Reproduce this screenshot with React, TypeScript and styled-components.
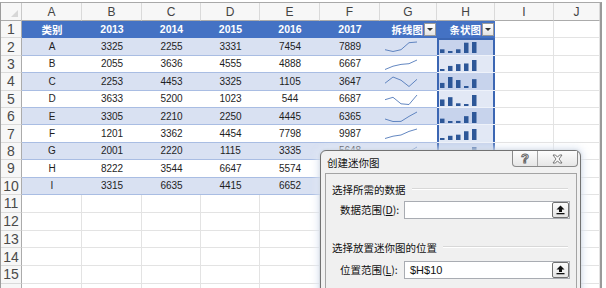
import React from "react";
import styled, { createGlobalStyle, css } from "styled-components";

const GlobalStyle = createGlobalStyle`
  html, body {
    margin: 0;
    padding: 0;
    background: #fff;
  }
  body {
    font-family: "Liberation Sans", "Noto Sans CJK SC", sans-serif;
  }
`;

const COL_WIDTHS = [21, 60, 60, 59, 59, 60, 60, 57, 58, 59, 46];
const LETTERS = ["A", "B", "C", "D", "E", "F", "G", "H", "I", "J"];
const YEARS = ["2013", "2014", "2015", "2016", "2017"];

// the last value of G, H and I sits under the dialog
const DATA = [
  { name: "A", v: [3325, 2255, 3331, 7454, 7889], hidden: false },
  { name: "B", v: [2055, 3636, 4555, 4888, 6667], hidden: false },
  { name: "C", v: [2253, 4453, 3325, 1105, 3647], hidden: false },
  { name: "D", v: [3633, 5200, 1023, 544, 6687], hidden: false },
  { name: "E", v: [3305, 2210, 2250, 4445, 6365], hidden: false },
  { name: "F", v: [1201, 3362, 4454, 7798, 9987], hidden: false },
  { name: "G", v: [2001, 2220, 1115, 3335, 5648], hidden: false },
  { name: "H", v: [8222, 3544, 6647, 5574, 4532], hidden: true },
  { name: "I", v: [3315, 6635, 4415, 6652, 7008], hidden: true },
];

type Kind = "head" | "band" | "plain" | "empty";
type Sel = "top" | "mid" | "bottom";

const Sheet = styled.div`
  position: relative;
  width: 606px;
  height: 288px;
  overflow: hidden;
  background: #fff;
`;

const Grid = styled.div`
  margin-top: 2px;
  display: grid;
  width: fit-content;
  grid-template-columns: ${COL_WIDTHS.map((w) => `${w}px`).join(" ")};
  grid-template-rows: 18px repeat(10, 17.4px) repeat(6, 17.8px);
  border-top: 1px solid #a9a9a9;
  border-left: 1px solid #9c9c9c;
  border-right: 2px solid #9a9a9a;
`;

const CornerCell = styled.div`
  position: relative;
  box-sizing: border-box;
  background: #f7f7f7;
  border-right: 1px solid #c9c9c9;
  border-bottom: 1px solid #ababab;

  &::after {
    content: "";
    position: absolute;
    right: 3px;
    bottom: 3px;
    width: 0;
    height: 0;
    border-left: 7px solid transparent;
    border-bottom: 7px solid #d7d7d7;
  }
`;

const ColHeader = styled.div`
  box-sizing: border-box;
  display: flex;
  align-items: center;
  justify-content: center;
  background: #f7f7f7;
  border-right: 1px solid #dadada;
  border-bottom: 1px solid #ababab;
  color: #444;
  font-size: 12px;
`;

const RowHeader = styled.div`
  box-sizing: border-box;
  display: flex;
  align-items: center;
  justify-content: center;
  background: #f7f7f7;
  border-right: 1px solid #ababab;
  border-bottom: 1px solid #dadada;
  color: #4a4a4a;
  font-size: 14px;
`;

const kindStyles: Record<Kind, ReturnType<typeof css>> = {
  head: css`
    background: #4472c4;
    color: #fff;
    font-weight: bold;
    font-size: 10.5px;
    border-bottom: 1px solid #4472c4;
  `,
  band: css`
    background: #d9e1f2;
    border-bottom: 1px solid #a9bde3;
  `,
  plain: css`
    background: #fff;
    border-bottom: 1px solid #a9bde3;
  `,
  empty: css`
    background: #fff;
    border-right: 1px solid #e3e3e3;
    border-bottom: 1px solid #e3e3e3;
  `,
};

const SEL_LINE = "#3b66b3";

const Cell = styled.div<{ $kind: Kind; $sel?: Sel; $end?: boolean }>`
  box-sizing: border-box;
  position: relative;
  display: flex;
  align-items: center;
  justify-content: ${({ $end }) => ($end ? "flex-end" : "center")};
  gap: 1px;
  padding-right: ${({ $end }) => ($end ? "1px" : "0")};
  overflow: hidden;
  font-size: 10px;
  color: #1e1e1e;
  ${({ $kind }) => kindStyles[$kind]}
  ${({ $sel, $kind }) =>
    $sel &&
    css`
      background: ${$kind === "band" ? "#c7d3ec" : "#e2e8f5"};
      border-bottom-color: #eef2fa;
      box-shadow: inset 2px 0 0 ${SEL_LINE}, inset -2px 0 0 ${SEL_LINE}
        ${$sel === "top" ? `, inset 0 2px 0 ${SEL_LINE}` : ""}
        ${$sel === "bottom" ? `, inset 0 -2px 0 ${SEL_LINE}` : ""};
    `}
`;

const DropButton = styled.span`
  position: relative;
  box-sizing: border-box;
  width: 12px;
  height: 13px;
  flex: none;
  background: linear-gradient(#ffffff, #e4e4e4);
  border: 1px solid #9a9a9a;

  &::after {
    content: "";
    position: absolute;
    left: 2px;
    top: 4px;
    border-left: 3px solid transparent;
    border-right: 3px solid transparent;
    border-top: 3px solid #333;
  }
`;

const SparkSvg = styled.svg`
  position: absolute;
  left: 0;
  top: 0;
`;

function norm(v: number[]) {
  const min = Math.min(...v);
  const max = Math.max(...v);
  return v.map((x) => (max === min ? 0.5 : (x - min) / (max - min)));
}

function LineSpark({ values }: { values: number[] }) {
  const pts = norm(values)
    .map((n, i) => `${5 + i * 8},${(13.5 - n * 9.5).toFixed(1)}`)
    .join(" ");
  return (
    <SparkSvg width="57" height="17">
      <polyline points={pts} fill="none" stroke="#5179ba" strokeWidth="0.9" />
    </SparkSvg>
  );
}

function BarSpark({ values }: { values: number[] }) {
  return (
    <SparkSvg width="58" height="17">
      {norm(values).map((n, i) => {
        const h = 2 + n * 9;
        return <rect key={i} x={3 + i * 8} y={15 - h} width="4.5" height={h} fill="#2d5798" />;
      })}
    </SparkSvg>
  );
}

/* ---------- dialog ---------- */

const Dialog = styled.div`
  position: absolute;
  left: 320px;
  top: 150px;
  width: 261px;
  height: 160px;
  box-sizing: border-box;
  background: #f1f1f1;
  border: 1px solid #727272;
  border-radius: 6px 6px 0 0;
  box-shadow: 0 0 7px 3px rgba(225, 233, 245, 0.85), 0 0 3px rgba(0, 0, 0, 0.35);
  font-family: "Noto Sans CJK SC", "Liberation Sans", sans-serif;
  color: #111;
`;

const TitleBar = styled.div`
  display: flex;
  align-items: flex-start;
  height: 22px;
`;

const Title = styled.div`
  padding: 5px 0 0 6px;
  font-size: 10.5px;
  line-height: 14px;
`;

const TitleButtons = styled.div`
  margin-left: auto;
  margin-right: 2px;
  display: flex;
  height: 16px;
  box-sizing: border-box;
  border: 1px solid #8a8a8a;
  border-top: none;
  border-radius: 0 0 4px 4px;
  background: linear-gradient(#fdfdfd, #e6e6e6);
  overflow: hidden;
`;

const TitleButton = styled.div<{ $w: number }>`
  width: ${({ $w }) => $w}px;
  display: flex;
  align-items: center;
  justify-content: center;
  & + & {
    border-left: 1px solid #a5a5a5;
  }
`;

const HelpGlyph = styled.span`
  font-family: "Liberation Sans", sans-serif;
  font-size: 13px;
  font-weight: bold;
  color: #fff;
  -webkit-text-stroke: 1px #666;
  line-height: 1;
`;

const Panel = styled.div`
  margin: 0 3px 0 4px;
  box-sizing: border-box;
  height: 140px;
  background: #f0f0f0;
  border: 1px solid #a4a4a4;
  padding: 8px 6px 0 6px;
`;

const SectionHead = styled.div<{ $gap?: number }>`
  display: flex;
  align-items: center;
  gap: 6px;
  height: 14px;
  margin-top: ${({ $gap }) => $gap ?? 0}px;
  font-size: 10.5px;
`;

const Groove = styled.div`
  flex: 1;
  margin-right: 2px;
  border-top: 1px solid #d8d8d8;
  border-bottom: 1px solid #fff;
`;

const FieldRow = styled.div<{ $gap: number }>`
  display: flex;
  align-items: center;
  margin-top: ${({ $gap }) => $gap}px;
  padding-left: 8px;
`;

const FieldLabel = styled.div`
  width: 64px;
  font-size: 10.5px;
  line-height: 18px;
  u {
    text-decoration: underline;
  }
`;

const RangeInput = styled.div`
  box-sizing: border-box;
  display: flex;
  align-items: center;
  width: 166px;
  height: 18px;
  background: #fff;
  border: 1px solid #a9acb2;
`;

const InputValue = styled.div`
  flex: 1;
  padding-left: 5px;
  font-family: "Liberation Sans", sans-serif;
  font-size: 11px;
  color: #111;
`;

const CollapseButton = styled.div`
  box-sizing: border-box;
  width: 17px;
  height: 16px;
  display: flex;
  align-items: center;
  justify-content: center;
  background: linear-gradient(#fbfbfb, #e5e5e5);
  border: 1px solid #707070;
  border-radius: 2px;
`;

function UpIcon() {
  return (
    <svg width="9" height="10" viewBox="0 0 9 10">
      <path d="M4.5 0.5 L8.5 4.5 L6 4.5 L6 7 L3 7 L3 4.5 L0.5 4.5 Z" fill="#111" />
      <rect x="0.5" y="8" width="8" height="1.3" fill="#111" />
    </svg>
  );
}

function CloseIcon() {
  return (
    <svg width="11" height="10" viewBox="0 0 11 10">
      <path
        d="M1 1 L3.5 1 L5.5 3.2 L7.5 1 L10 1 L7 5 L10 9 L7.5 9 L5.5 6.8 L3.5 9 L1 9 L4 5 Z"
        fill="#fff"
        stroke="#6a6a6a"
        strokeWidth="0.9"
        strokeLinejoin="round"
      />
    </svg>
  );
}

function SparklineDialog() {
  return (
    <Dialog>
      <TitleBar>
        <Title>创建迷你图</Title>
        <TitleButtons>
          <TitleButton $w={24}>
            <HelpGlyph>?</HelpGlyph>
          </TitleButton>
          <TitleButton $w={39}>
            <CloseIcon />
          </TitleButton>
        </TitleButtons>
      </TitleBar>
      <Panel>
        <SectionHead>
          <span>选择所需的数据</span>
          <Groove />
        </SectionHead>
        <FieldRow $gap={5}>
          <FieldLabel>
            数据范围(<u>D</u>):
          </FieldLabel>
          <RangeInput>
            <InputValue />
            <CollapseButton>
              <UpIcon />
            </CollapseButton>
          </RangeInput>
        </FieldRow>
        <SectionHead $gap={21}>
          <span>选择放置迷你图的位置</span>
          <Groove />
        </SectionHead>
        <FieldRow $gap={7}>
          <FieldLabel>
            位置范围(<u>L</u>):
          </FieldLabel>
          <RangeInput>
            <InputValue>$H$10</InputValue>
            <CollapseButton>
              <UpIcon />
            </CollapseButton>
          </RangeInput>
        </FieldRow>
      </Panel>
    </Dialog>
  );
}

export default function App() {
  const rowCount = 16;
  const cells: React.ReactNode[] = [];

  cells.push(<CornerCell key="corner" />);
  LETTERS.forEach((l) => cells.push(<ColHeader key={`h${l}`}>{l}</ColHeader>));

  for (let r = 1; r <= rowCount; r++) {
    // row 16 is only a sliver at the bottom edge, its number is not in view
    cells.push(<RowHeader key={`r${r}`}>{r < rowCount ? r : null}</RowHeader>);
    for (let c = 0; c < LETTERS.length; c++) {
      const key = `${r}-${c}`;
      if (c > 7 || r > 10) {
        cells.push(<Cell key={key} $kind="empty" />);
        continue;
      }
      if (r === 1) {
        if (c === 0) cells.push(<Cell key={key} $kind="head">类别</Cell>);
        else if (c <= 5) cells.push(<Cell key={key} $kind="head">{YEARS[c - 1]}</Cell>);
        else
          cells.push(
            <Cell key={key} $kind="head" $end>
              {c === 6 ? "拆线图" : "条状图"}
              <DropButton />
            </Cell>
          );
        continue;
      }
      const row = DATA[r - 2];
      const kind: Kind = r % 2 === 0 ? "band" : "plain";
      if (c === 0) cells.push(<Cell key={key} $kind={kind}>{row.name}</Cell>);
      else if (c <= 5)
        cells.push(
          <Cell key={key} $kind={kind}>
            {c === 5 && row.hidden ? null : row.v[c - 1]}
          </Cell>
        );
      else if (c === 6)
        cells.push(
          <Cell key={key} $kind={kind}>
            <LineSpark values={row.v} />
          </Cell>
        );
      else {
        const sel: Sel = r === 2 ? "top" : r === 10 ? "bottom" : "mid";
        cells.push(
          <Cell key={key} $kind={kind} $sel={sel}>
            <BarSpark values={row.v} />
          </Cell>
        );
      }
    }
  }

  return (
    <>
      <GlobalStyle />
      <Sheet>
        <Grid>{cells}</Grid>
        <SparklineDialog />
      </Sheet>
    </>
  );
}
